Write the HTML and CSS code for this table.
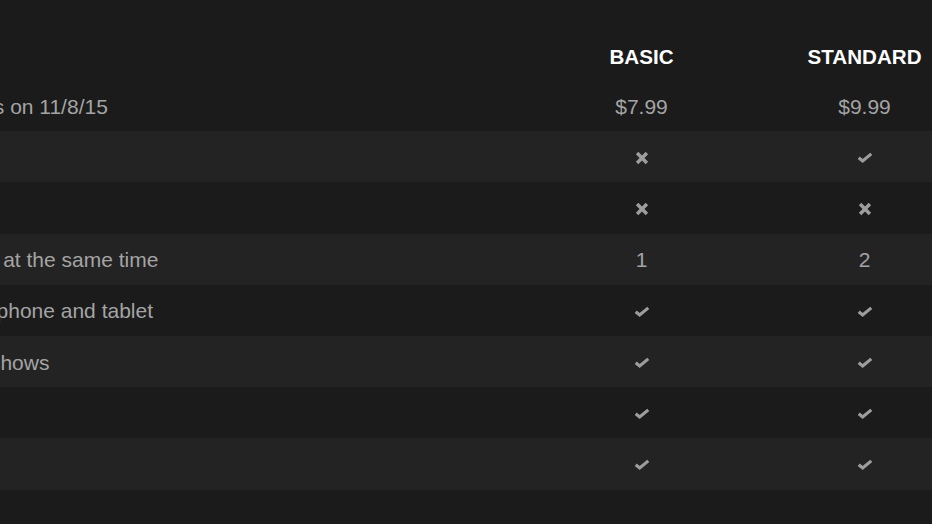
FILE: index.html
```html
<!DOCTYPE html>
<html lang="en">
<head>
<meta charset="utf-8">
<title>Plans</title>
<link rel="stylesheet" href="styles.css">
</head>
<body>
<div class="viewport">
  <div class="plans">
    <div class="row head">
      <div class="label"></div>
      <div class="cell plan">BASIC</div>
      <div class="cell plan">STANDARD</div>
      <div class="cell plan">PREMIUM</div>
    </div>
    <div class="row">
      <div class="label">Price after free month ends on 11/8/15</div>
      <div class="cell">$7.99</div>
      <div class="cell">$9.99</div>
      <div class="cell">$11.99</div>
    </div>
    <div class="row alt">
      <div class="label">HD available</div>
      <div class="cell"><svg class="ico x" viewBox="0 0 12 12"><path d="M1.8 1.8L10.2 10.2M10.2 1.8L1.8 10.2"/></svg></div>
      <div class="cell"><svg class="ico ck" viewBox="0 0 15 10"><path d="M1.6 5.2L5.3 8.2L13.4 1.6"/></svg></div>
      <div class="cell"><svg class="ico ck" viewBox="0 0 15 10"><path d="M1.6 5.2L5.3 8.2L13.4 1.6"/></svg></div>
    </div>
    <div class="row">
      <div class="label">Ultra HD available</div>
      <div class="cell"><svg class="ico x" viewBox="0 0 12 12"><path d="M1.8 1.8L10.2 10.2M10.2 1.8L1.8 10.2"/></svg></div>
      <div class="cell"><svg class="ico x" viewBox="0 0 12 12"><path d="M1.8 1.8L10.2 10.2M10.2 1.8L1.8 10.2"/></svg></div>
      <div class="cell"><svg class="ico ck" viewBox="0 0 15 10"><path d="M1.6 5.2L5.3 8.2L13.4 1.6"/></svg></div>
    </div>
    <div class="row alt">
      <div class="label">Screens you can watch on at the same time</div>
      <div class="cell">1</div>
      <div class="cell">2</div>
      <div class="cell">4</div>
    </div>
    <div class="row">
      <div class="label">Watch on your laptop, TV, phone and tablet</div>
      <div class="cell"><svg class="ico ck" viewBox="0 0 15 10"><path d="M1.6 5.2L5.3 8.2L13.4 1.6"/></svg></div>
      <div class="cell"><svg class="ico ck" viewBox="0 0 15 10"><path d="M1.6 5.2L5.3 8.2L13.4 1.6"/></svg></div>
      <div class="cell"><svg class="ico ck" viewBox="0 0 15 10"><path d="M1.6 5.2L5.3 8.2L13.4 1.6"/></svg></div>
    </div>
    <div class="row alt">
      <div class="label">Unlimited movies and TV shows</div>
      <div class="cell"><svg class="ico ck" viewBox="0 0 15 10"><path d="M1.6 5.2L5.3 8.2L13.4 1.6"/></svg></div>
      <div class="cell"><svg class="ico ck" viewBox="0 0 15 10"><path d="M1.6 5.2L5.3 8.2L13.4 1.6"/></svg></div>
      <div class="cell"><svg class="ico ck" viewBox="0 0 15 10"><path d="M1.6 5.2L5.3 8.2L13.4 1.6"/></svg></div>
    </div>
    <div class="row">
      <div class="label">Cancel anytime</div>
      <div class="cell"><svg class="ico ck" viewBox="0 0 15 10"><path d="M1.6 5.2L5.3 8.2L13.4 1.6"/></svg></div>
      <div class="cell"><svg class="ico ck" viewBox="0 0 15 10"><path d="M1.6 5.2L5.3 8.2L13.4 1.6"/></svg></div>
      <div class="cell"><svg class="ico ck" viewBox="0 0 15 10"><path d="M1.6 5.2L5.3 8.2L13.4 1.6"/></svg></div>
    </div>
    <div class="row alt">
      <div class="label">First month free</div>
      <div class="cell"><svg class="ico ck" viewBox="0 0 15 10"><path d="M1.6 5.2L5.3 8.2L13.4 1.6"/></svg></div>
      <div class="cell"><svg class="ico ck" viewBox="0 0 15 10"><path d="M1.6 5.2L5.3 8.2L13.4 1.6"/></svg></div>
      <div class="cell"><svg class="ico ck" viewBox="0 0 15 10"><path d="M1.6 5.2L5.3 8.2L13.4 1.6"/></svg></div>
    </div>
  </div>
</div>
</body>
</html>
```
FILE: styles.css
```css
html, body {
  margin: 0;
  padding: 0;
  background: #1b1b1b;
  overflow: hidden;
}
.viewport {
  width: 932px;
  height: 524px;
  overflow: hidden;
}
.plans {
  margin-left: -269px;
  width: 1468px;
  font-family: "Liberation Sans", Arial, sans-serif;
  font-size: 21px;
  color: #a4a4a4;
}
.row {
  display: grid;
  grid-template-columns: 799px 223px 223px 223px;
  height: 51.2px;
  align-items: center;
  padding-top: 2px;
  box-sizing: border-box;
}
.row.head {
  height: 80px;
  align-items: end;
  padding-top: 0;
}
.row.alt {
  background: #232323;
}
.label {
  padding-left: 20px;
  white-space: nowrap;
}
.cell {
  display: flex;
  justify-content: center;
  align-items: center;
}
.plan {
  color: #ffffff;
  font-weight: bold;
  font-size: 20.6px;
  line-height: 24px;
  padding-bottom: 11px;
}
.ico {
  display: block;
  fill: none;
  stroke: #9d9d9d;
}
.ico.x {
  width: 14px;
  height: 14px;
  stroke-width: 3;
}
.ico.ck {
  width: 16px;
  height: 11px;
  stroke-width: 3;
}
```
